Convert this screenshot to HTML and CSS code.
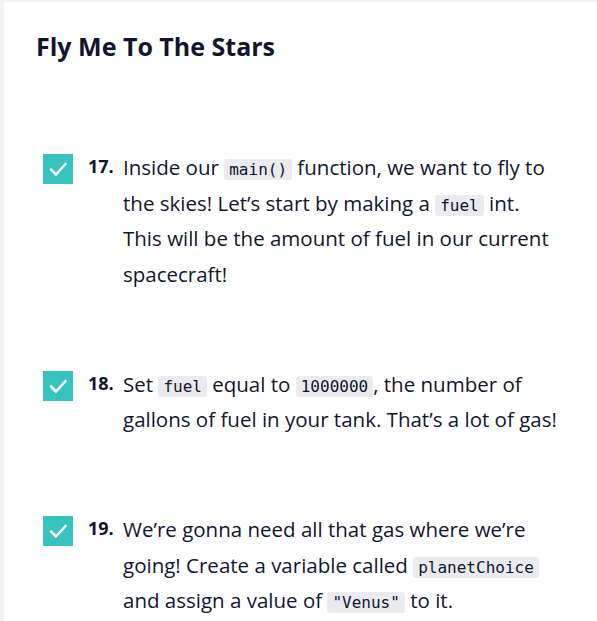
FILE: index.html
```html
<!DOCTYPE html>
<html>
<head>
<meta charset="utf-8">
<link rel="stylesheet" href="styles.css">
</head>
<body>
<main class="panel">
  <h1 class="title">Fly Me To The Stars</h1>
  <ol class="tasks">
    <li class="task">
      <span class="check"><svg viewBox="0 0 30 30" width="30" height="30"><path d="M8 15.5 L13 20.5 L22.5 10" fill="none" stroke="#fff" stroke-width="2.6" stroke-linecap="round" stroke-linejoin="round"/></svg></span>
      <span class="num">17.</span>
      <p class="text">Inside our <code>main()</code> function, we want to fly to the skies! Let’s start by making a <code>fuel</code> int. This will be the amount of fuel in our current spacecraft!</p>
    </li>
    <li class="task">
      <span class="check"><svg viewBox="0 0 30 30" width="30" height="30"><path d="M8 15.5 L13 20.5 L22.5 10" fill="none" stroke="#fff" stroke-width="2.6" stroke-linecap="round" stroke-linejoin="round"/></svg></span>
      <span class="num">18.</span>
      <p class="text">Set <code>fuel</code> equal to <code>1000000</code>, the number of gallons of fuel in your tank. That’s a lot of gas!</p>
    </li>
    <li class="task">
      <span class="check"><svg viewBox="0 0 30 30" width="30" height="30"><path d="M8 15.5 L13 20.5 L22.5 10" fill="none" stroke="#fff" stroke-width="2.6" stroke-linecap="round" stroke-linejoin="round"/></svg></span>
      <span class="num">19.</span>
      <p class="text">We’re gonna need all that gas where we’re going! Create a variable called <code>planetChoice</code> and assign a value of <code>"Venus"</code> to it.</p>
    </li>
  </ol>
</main>
</body>
</html>
```
FILE: styles.css
```css
html, body {
  margin: 0;
  padding: 0;
  background: #f3f3f4;
  height: 100%;
  overflow: hidden;
}
.panel {
  margin: 2px 0 0 4px;
  background: #fff;
  min-height: 100%;
  padding: 30px 38px 0 32px;
  color: #10162f;
  font-family: "Open Sans", "Noto Sans", sans-serif;
}
.title {
  margin: 0;
  font-size: 25px;
  line-height: 28px;
  font-weight: 700;
}
.tasks {
  list-style: none;
  margin: 92px 0 0 0;
  padding: 0 0 0 7px;
  display: flex;
  flex-direction: column;
  gap: 76.5px;
}
.task {
  display: flex;
  align-items: flex-start;
}
.check {
  flex: none;
  width: 30px;
  height: 30px;
  background: #37c3bd;
  margin-top: 2px;
  display: flex;
}
.num {
  flex: none;
  width: 35px;
  margin-left: 15px;
  font-weight: 700;
  font-size: 18px;
  line-height: 35.5px;
  margin-top: -3px;
}
.text {
  margin: -2px 0 0 0;
  font-size: 20.5px;
  line-height: 35.5px;
}
code {
  font-family: "DejaVu Sans Mono", "Liberation Mono", monospace;
  font-size: 16px;
  line-height: 17px;
  background: #eaeaef;
  border-radius: 3px;
  padding: 1px 5px;
}
```
